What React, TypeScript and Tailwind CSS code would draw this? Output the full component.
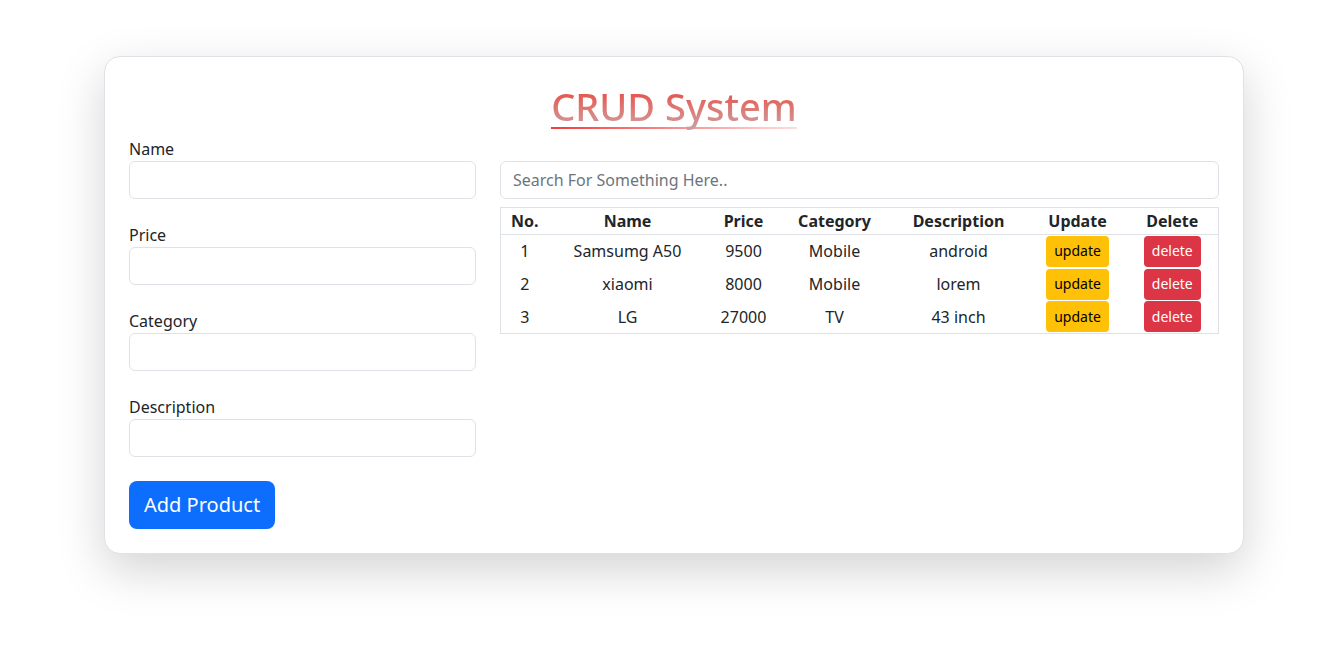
import React, { useState } from 'react';

type Product = {
  name: string;
  price: string;
  category: string;
  description: string;
};

const initialProducts: Product[] = [
  { name: 'Samsumg A50', price: '9500', category: 'Mobile', description: 'android' },
  { name: 'xiaomi', price: '8000', category: 'Mobile', description: 'lorem' },
  { name: 'LG', price: '27000', category: 'TV', description: '43 inch' },
];

const inputClass =
  'block w-full h-[38px] px-3 text-base text-[#212529] bg-white border border-[#dee2e6] rounded-md outline-none placeholder:text-[#6c757d]';

const App: React.FC = () => {
  const [products] = useState<Product[]>(initialProducts);
  const [search, setSearch] = useState('');

  const fields = ['Name', 'Price', 'Category', 'Description'];

  return (
    <div
      className="min-h-screen bg-white pt-[56px] pl-[104px] text-[#212529]"
      style={{ fontFamily: '"Noto Sans", "Open Sans", sans-serif' }}
    >
      <div className="w-[1140px] bg-white border border-[#dee2e6] rounded-2xl shadow-[0_1rem_3rem_rgba(0,0,0,0.175)] p-6">
        {/* Title */}
        <div className="flex justify-center mb-2">
          <h1 className="text-[38px] leading-[42px] pt-1 font-medium border-b-2 border-transparent [border-image:linear-gradient(to_right,#f03c3c,#ffdede)_1]">
            <span className="bg-gradient-to-b from-[#ec1f27] to-[#c6a4a8] bg-clip-text text-transparent">
              CRUD System
            </span>
          </h1>
        </div>

        <div className="flex gap-6">
          {/* Form */}
          <div className="w-[347px] shrink-0">
            {fields.map((f) => (
              <div key={f} className="mb-6">
                <label className="block text-base leading-6">{f}</label>
                <input type="text" className={inputClass} />
              </div>
            ))}
            <button className="h-12 px-[15px] text-xl text-white bg-[#0d6efd] rounded-lg">
              Add Product
            </button>
          </div>

          {/* Table */}
          <div className="flex-1 mt-6">
            <input
              type="text"
              value={search}
              onChange={(e) => setSearch(e.target.value)}
              placeholder="Search For Something Here.."
              className={inputClass}
            />
            <table className="w-full mt-2 border border-[#dee2e6] text-center text-base table-fixed">
              <colgroup>
                <col className="w-[48px]" />
                <col className="w-[158px]" />
                <col className="w-[74px]" />
                <col className="w-[108px]" />
                <col className="w-[140px]" />
                <col className="w-[98px]" />
                <col />
              </colgroup>
              <thead>
                <tr className="border-b border-[#dee2e6]">
                  {['No.', 'Name', 'Price', 'Category', 'Description', 'Update', 'Delete'].map((h) => (
                    <th key={h} className="font-bold h-[27px] py-0 leading-6">
                      {h}
                    </th>
                  ))}
                </tr>
              </thead>
              <tbody>
                {products
                  .filter((p) => p.name.toLowerCase().includes(search.toLowerCase()))
                  .map((p, i) => (
                    <tr key={p.name} className="h-[33px]">
                      <td>{i + 1}</td>
                      <td>{p.name}</td>
                      <td>{p.price}</td>
                      <td>{p.category}</td>
                      <td>{p.description}</td>
                      <td>
                        <button className="h-[31px] px-2 text-sm bg-[#ffc107] text-black rounded">
                          update
                        </button>
                      </td>
                      <td>
                        <button className="h-[31px] px-2 text-sm bg-[#dc3545] text-white rounded">
                          delete
                        </button>
                      </td>
                    </tr>
                  ))}
              </tbody>
            </table>
          </div>
        </div>
      </div>
    </div>
  );
};

export default App;
